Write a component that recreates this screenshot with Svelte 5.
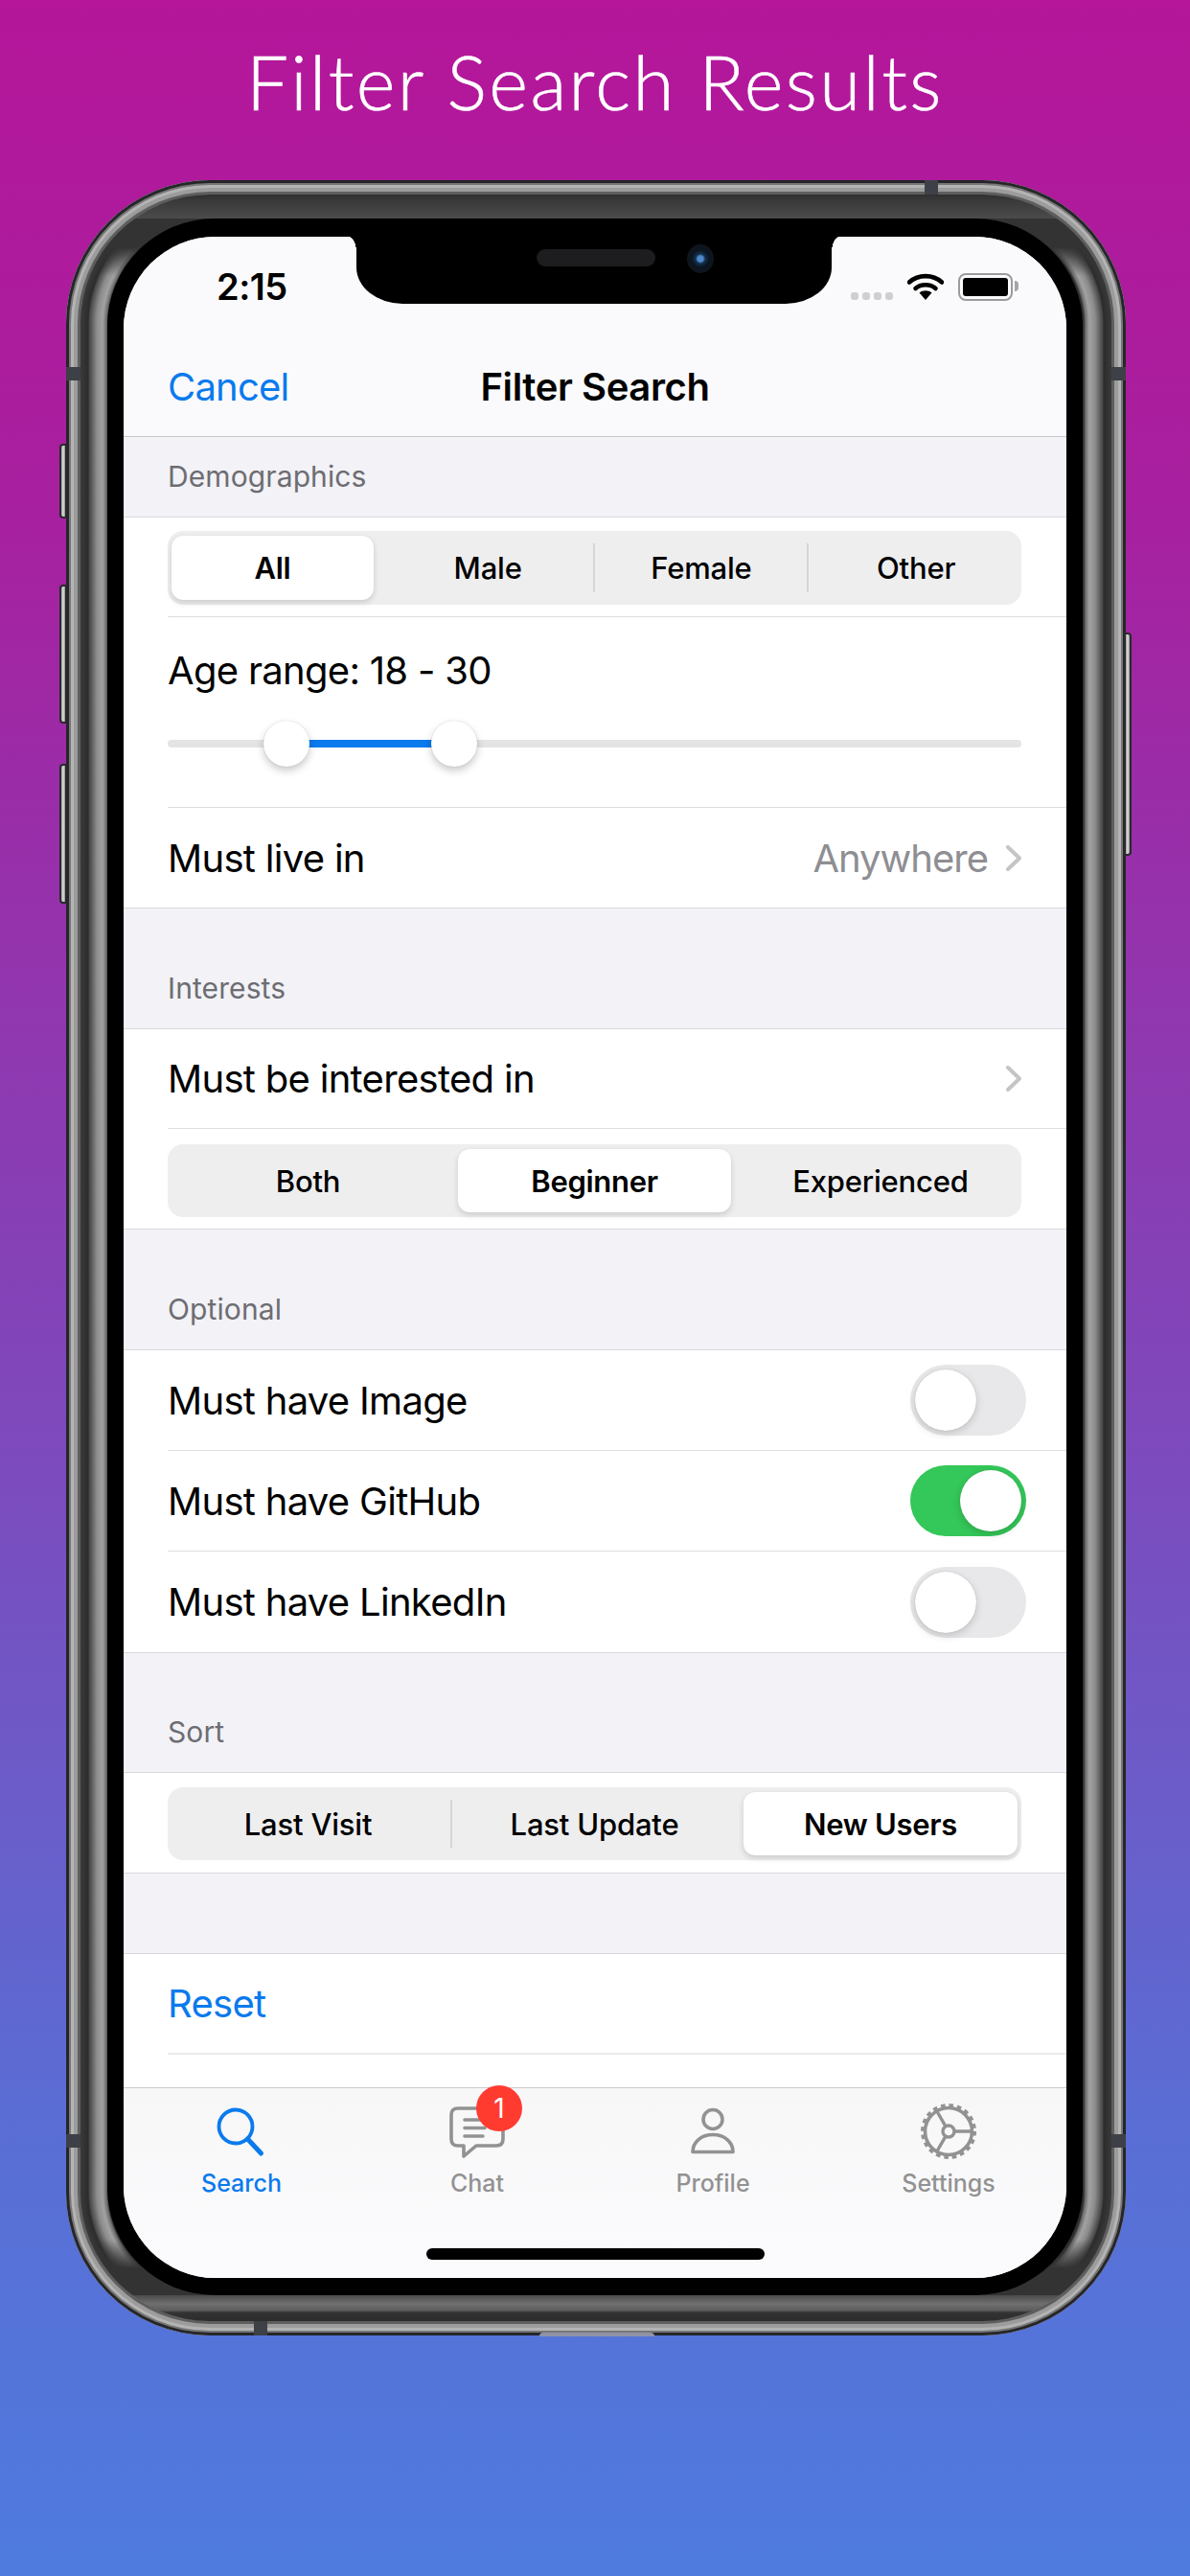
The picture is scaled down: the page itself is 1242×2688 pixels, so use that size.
<script lang="ts">
	type Seg = { label: string; on?: boolean; rule?: boolean };

	const gender: Seg[] = [
		{ label: 'All', on: true },
		{ label: 'Male' },
		{ label: 'Female', rule: true },
		{ label: 'Other', rule: true }
	];
	const level: Seg[] = [{ label: 'Both' }, { label: 'Beginner', on: true }, { label: 'Experienced' }];
	const sort: Seg[] = [{ label: 'Last Visit' }, { label: 'Last Update', rule: true }, { label: 'New Users', on: true }];

	const optional = [
		{ label: 'Must have Image', on: false },
		{ label: 'Must have GitHub', on: true },
		{ label: 'Must have LinkedIn', on: false }
	];

	// thumb centres along the 891px track
	const low = 124;
	const high = 299;

	const tabs = ['Search', 'Chat', 'Profile', 'Settings'];
</script>

{#snippet segmented(items: Seg[])}
	<div class="seg" style="grid-template-columns: repeat({items.length}, 1fr)">
		{#each items as it}
			<div class="cell" class:on={it.on} class:rule={it.rule}>{it.label}</div>
		{/each}
	</div>
{/snippet}

{#snippet chevron()}
	<svg class="chev" viewBox="0 0 16 27" width="16" height="27">
		<path d="M2 2 L14 13.5 L2 25" fill="none" stroke="#c5c5c8" stroke-width="4" stroke-linecap="round" stroke-linejoin="round" />
	</svg>
{/snippet}

<div class="stage">
	<h1>Filter Search Results</h1>

	<div class="phone">
		<i class="btn b1"></i><i class="btn b2"></i><i class="btn b3"></i><i class="btn b4"></i>
		<i class="ant al1"></i><i class="ant al2"></i><i class="ant ar1"></i><i class="ant ar2"></i>
		<i class="ant at"></i><i class="ant ab"></i>
		<i class="bump"></i>

		<div class="mid">
			<div class="black">
				<div class="screen">
					<div class="notch">
						<span class="speaker"></span>
						<span class="camera"></span>
					</div>

					<header class="top">
						<div class="status">
							<span class="time">2:15</span>
							<div class="indicators">
								<span class="dots"><i></i><i></i><i></i><i></i></span>
								<svg viewBox="0 0 38 28" width="38" height="28">
									<path d="M2 9.5 C11.5 1 26.5 1 36 9.5" fill="none" stroke="#000" stroke-width="4.6" stroke-linecap="round" />
									<path d="M8.5 16 C14 11 24 11 29.5 16" fill="none" stroke="#000" stroke-width="4.6" stroke-linecap="round" />
									<path d="M19 28 L12.5 20.5 C16 17.5 22 17.5 25.5 20.5 Z" fill="#000" />
								</svg>
								<span class="battery"><i></i></span>
							</div>
						</div>
						<nav class="nav">
							<span class="cancel">Cancel</span>
							<strong>Filter Search</strong>
						</nav>
					</header>

					<main>
						<div class="head first">Demographics</div>
						<section>
							<div class="row seg-row s1">{@render segmented(gender)}</div>
							<div class="row age">
								<div class="age-label">Age range: 18 - 30</div>
								<div class="track">
									<div class="fill" style="left: {low}px; width: {high - low}px"></div>
									<span class="thumb" style="left: {low}px"></span>
									<span class="thumb" style="left: {high}px"></span>
								</div>
							</div>
							<div class="row last live">
								<span>Must live in</span>
								<span class="value">Anywhere</span>
								{@render chevron()}
							</div>
						</section>

						<div class="head">Interests</div>
						<section>
							<div class="row"><span>Must be interested in</span>{@render chevron()}</div>
							<div class="row seg-row last s2">{@render segmented(level)}</div>
						</section>

						<div class="head">Optional</div>
						<section>
							{#each optional as o, i}
								<div class="row opt" class:last={i === optional.length - 1}>
									<span>{o.label}</span>
									<span class="toggle" class:on={o.on}><i></i></span>
								</div>
							{/each}
						</section>

						<div class="head sort">Sort</div>
						<section>
							<div class="row seg-row last s3">{@render segmented(sort)}</div>
						</section>

						<div class="gap"></div>
						<section class="end">
							<div class="row reset">Reset</div>
						</section>
					</main>

					<footer class="tabbar">
						<div class="tabs">
							{#each tabs as t, i}
								<div class="tab" class:active={i === 0}>
									<div class="icon">
										{#if t === 'Search'}
											<svg viewBox="0 0 60 60" width="60" height="60" fill="none" stroke="#0a7aed" stroke-width="3.8" stroke-linecap="round">
												<circle cx="24" cy="25" r="17.5" />
												<path d="M36.5 38 L50.5 53" stroke-width="5" />
											</svg>
										{:else if t === 'Chat'}
											<svg viewBox="0 0 60 60" width="60" height="60" fill="none" stroke="#929292" stroke-width="3.6" stroke-linecap="round" stroke-linejoin="round">
												<path d="M10 6 H50 Q57 6 57 13 V38 Q57 45 50 45 H29 L16 56 V45 H10 Q3 45 3 38 V13 Q3 6 10 6 Z" />
												<path d="M17 18 H38 M17 26.5 H38 M17 35 H36" />
											</svg>
											<span class="badge">1</span>
										{:else if t === 'Profile'}
											<svg viewBox="0 0 60 60" width="60" height="60" fill="none" stroke="#929292" stroke-width="3.6" stroke-linejoin="round">
												<circle cx="30" cy="17.5" r="10" />
												<path d="M9 51.5 C9 41 18 33.5 30 33.5 C42 33.5 51 41 51 51.5 Z" />
											</svg>
										{:else}
											<svg viewBox="0 0 60 60" width="60" height="60" fill="none" stroke="#929292">
												<circle cx="30" cy="30" r="24.5" stroke-width="3.6" />
												<circle cx="30" cy="30" r="27" stroke-width="4" stroke-dasharray="4.6 3.88" />
												<circle cx="30" cy="30" r="6" stroke-width="3.4" />
												<path d="M36 30 H54 M27 24.8 L17.8 9 M27 35.2 L17.8 51" stroke-width="3.4" />
											</svg>
										{/if}
									</div>
									<span class="tab-label">{t}</span>
								</div>
							{/each}
						</div>
						<div class="home"></div>
					</footer>
				</div>
			</div>
		</div>
	</div>
</div>

<style>
	:global(body) {
		margin: 0;
	}
	.stage {
		height: 2688px;
		box-sizing: border-box;
		padding-top: 35px;
		overflow: hidden;
		background: linear-gradient(180deg, #b5169a 0%, #a7209f 20%, #7b4cbe 58%, #5a6dd4 82%, #4f7bdf 100%);
		font-family: Inter, 'Liberation Sans', sans-serif;
		color: #000;
	}
	h1 {
		margin: 0 0 53px;
		height: 100px;
		line-height: 100px;
		text-align: center;
		color: #fff;
		font-family: Lato, 'Open Sans', sans-serif;
		font-weight: 300;
		font-size: 78px;
		letter-spacing: 2.4px;
		-webkit-text-stroke: 0.6px #fff;
	}

	/* bezel, built from the outside in */
	.phone {
		position: relative;
		box-sizing: border-box;
		width: 1106px;
		height: 2249px;
		margin-left: 69px;
		padding: 15px;
		border-radius: 150px;
		background: #777;
		box-shadow:
			inset 0 0 0 3px #26262a,
			inset 0 0 0 5px #777,
			inset 0 0 0 8px #b4b4b4,
			inset 0 0 0 12px #9c9c9c,
			inset 0 0 0 15px #5e5e5e;
	}
	.mid {
		--bands: #2e2e2e 106px, #6e6e6e 108px, #a2a2a2 112px, #8c8c8c 118px, #444 126px, #2c2c2c 127px, #3a3a3a 135px;
		position: relative;
		box-sizing: border-box;
		height: 100%;
		padding: 25px 30px 27px 28px;
		border-radius: 135px;
		background:
			linear-gradient(180deg, #303030 0, #3a3a3a 7px, #4b4b4b 25px) 0 0 / 100% 25px no-repeat,
			linear-gradient(0deg, #2c2c2c 0, #333 9px, #5c5c5c 11px, #707070 18px, #4a4a4a 27px) 0 100% / 100% 27px no-repeat,
			#333;
	}
	.mid::before {
		content: '';
		position: absolute;
		inset: 0;
		border-radius: inherit;
		background:
			radial-gradient(circle 135px at 100% 100%, var(--bands)) 0 0 / 135px 135px no-repeat,
			radial-gradient(circle 135px at 0 100%, var(--bands)) 100% 0 / 135px 135px no-repeat,
			radial-gradient(circle 135px at 100% 0, var(--bands)) 0 100% / 135px 135px no-repeat,
			radial-gradient(circle 135px at 0 0, var(--bands)) 100% 100% / 135px 135px no-repeat,
			linear-gradient(270deg, var(--bands)) 0 50% / 135px calc(100% - 270px) no-repeat,
			linear-gradient(90deg, var(--bands)) 100% 50% / 135px calc(100% - 270px) no-repeat;
		-webkit-mask-image: linear-gradient(180deg, transparent 55px, #000 85px, #000 calc(100% - 85px), transparent calc(100% - 55px));
		mask-image: linear-gradient(180deg, transparent 55px, #000 85px, #000 calc(100% - 85px), transparent calc(100% - 55px));
	}
	.black {
		position: relative;
		box-sizing: border-box;
		height: 100%;
		padding: 19px 17px 18px;
		border-radius: 112px;
		background: #000;
	}
	.screen {
		position: relative;
		display: flex;
		flex-direction: column;
		height: 100%;
		overflow: hidden;
		border-radius: 96px;
		background: #f2f2f7;
	}

	.btn {
		position: absolute;
		left: -7px;
		width: 8px;
		box-sizing: border-box;
		border: 2px solid #2a2a2e;
		border-radius: 4px 0 0 4px;
		background: linear-gradient(90deg, #999, #e2e2e2 50%, #8a8a8a);
	}
	.b1 { top: 275px; height: 78px; }
	.b2 { top: 422px; height: 145px; }
	.b3 { top: 609px; height: 146px; }
	.b4 {
		left: auto;
		right: -6px;
		top: 472px;
		height: 233px;
		border-radius: 0 4px 4px 0;
	}
	.ant {
		position: absolute;
		background: #3d4047;
	}
	.al1, .al2, .ar1, .ar2 { width: 15px; height: 14px; }
	.al1, .al2 { left: 0; }
	.ar1, .ar2 { right: 0; }
	.al1, .ar1 { top: 195px; }
	.al2, .ar2 { top: 2039px; }
	.at, .ab { width: 14px; height: 15px; }
	.at { top: 0; left: 896px; }
	.ab { bottom: 0; left: 196px; }
	.bump {
		position: absolute;
		left: 494px;
		bottom: -1px;
		width: 120px;
		height: 4px;
		border-radius: 8px 8px 0 0;
		background: #8f93a8;
	}

	.notch {
		position: absolute;
		z-index: 2;
		top: 0;
		left: 243px;
		width: 496px;
		height: 70px;
		background: #000;
		border-radius: 0 0 48px 48px / 0 0 38px 38px;
	}
	.notch::before,
	.notch::after {
		content: '';
		position: absolute;
		top: 0;
		width: 8px;
		height: 16px;
	}
	.notch::before {
		left: -8px;
		background: radial-gradient(ellipse 8px 16px at 0 100%, transparent 98%, #000 100%);
	}
	.notch::after {
		right: -8px;
		background: radial-gradient(ellipse 8px 16px at 100% 100%, transparent 98%, #000 100%);
	}
	.speaker {
		position: absolute;
		left: 188px;
		top: 13px;
		width: 124px;
		height: 18px;
		border-radius: 9px;
		background: #1d1d1f;
	}
	.camera {
		position: absolute;
		left: 345px;
		top: 8px;
		width: 28px;
		height: 30px;
		border-radius: 50%;
		background: radial-gradient(circle, #4d86c9 0 3px, #12304f 5px, #0c1420 9px, #14161a 100%);
	}

	.top {
		height: 209px;
		box-sizing: border-box;
		border-bottom: 1px solid #c9c9cc;
		background: #fafafc;
	}
	.status {
		display: flex;
		justify-content: space-between;
		align-items: center;
		height: 104px;
		padding: 0 50px 0 97px;
	}
	.time {
		font-size: 38px;
		font-weight: 600;
		letter-spacing: -0.5px;
	}
	.indicators {
		display: flex;
		align-items: flex-start;
		gap: 15px;
	}
	.dots {
		display: flex;
		gap: 4px;
		margin-top: 20px;
	}
	.dots i {
		width: 8px;
		height: 8px;
		border-radius: 3px;
		background: #cfcfd1;
	}
	.battery {
		position: relative;
		box-sizing: border-box;
		width: 57px;
		height: 29px;
		padding: 3px;
		margin-right: 6px;
		border: 2px solid #9b9b9e;
		border-radius: 8px;
	}
	.battery i {
		display: block;
		height: 100%;
		border-radius: 3px;
		background: #000;
	}
	.battery::after {
		content: '';
		position: absolute;
		right: -8px;
		top: 6px;
		width: 4px;
		height: 11px;
		border-radius: 0 4px 4px 0;
		background: #a5a5a8;
	}
	.nav {
		position: relative;
		display: flex;
		justify-content: center;
		align-items: center;
		height: 104px;
		font-size: 40px;
	}
	.nav strong {
		font-weight: 600;
		letter-spacing: -0.4px;
	}
	.cancel {
		position: absolute;
		left: 46px;
		color: #0a7aed;
		letter-spacing: -0.8px;
	}

	main {
		flex: 1;
		min-height: 0;
		display: flex;
		flex-direction: column;
		overflow: hidden;
	}
	.head {
		box-sizing: border-box;
		height: 125px;
		flex: none;
		padding: 0 46px 24px;
		display: flex;
		align-items: flex-end;
		font-size: 30px;
		line-height: 36px;
		letter-spacing: 0.1px;
		color: #6d6d72;
	}
	.head.first { height: 83px; }
	.head.sort { height: 124px; }
	section {
		flex: none;
		background: #fff;
		border-top: 1px solid #d8d8dc;
	}
	section.end {
		flex: 1;
	}
	.row {
		display: flex;
		align-items: center;
		box-sizing: border-box;
		height: 104px;
		margin-left: 46px;
		padding-right: 47px;
		border-bottom: 1px solid #dededf;
		font-size: 40px;
		letter-spacing: -0.7px;
	}
	.row > span:first-child {
		margin-right: auto;
	}
	.row.last {
		margin-left: 0;
		padding-left: 46px;
		border-bottom-color: #d8d8dc;
	}
	.row.live { height: 105px; }
	.row.s1 { align-items: flex-start; padding-top: 14px; }
	.row.s2 { align-items: flex-start; padding-top: 16px; height: 105px; }
	.row.s3 { align-items: flex-start; padding-top: 15px; height: 105px; }
	.age {
		display: block;
		height: 199px;
		padding-top: 36px;
	}
	.age-label {
		line-height: 40px;
	}
	.track {
		position: relative;
		height: 8px;
		margin-top: 52px;
		border-radius: 4px;
		background: #e4e4e5;
	}
	.fill {
		position: absolute;
		top: 0;
		height: 8px;
		background: #0a7aed;
	}
	.thumb {
		position: absolute;
		top: -20px;
		width: 48px;
		height: 48px;
		margin-left: -24px;
		border-radius: 50%;
		background: #fff;
		box-shadow: 0 4px 8px rgba(0, 0, 0, 0.22), 0 0 1px rgba(0, 0, 0, 0.2);
	}
	.value {
		margin-right: 19px;
		color: #8e8e93;
		letter-spacing: -1px;
	}
	.seg {
		flex: 1;
		display: grid;
		height: 76px;
		border-radius: 16px;
		background: #eeeeef;
	}
	.s1 .seg { height: 77px; }
	.cell {
		position: relative;
		display: flex;
		align-items: center;
		justify-content: center;
		margin: 5px 6px;
		font-size: 31px;
		font-weight: 450;
		letter-spacing: -0.2px;
	}
	.cell:first-child { margin-left: 4px; margin-right: 8px; }
	.cell:last-child { margin-left: 7px; margin-right: 4px; }
	.cell.on {
		border-radius: 12px;
		background: #fff;
		font-weight: 600;
		letter-spacing: -0.3px;
		box-shadow: 0 3px 6px rgba(0, 0, 0, 0.14), 0 0 1px rgba(0, 0, 0, 0.1);
	}
	.cell.rule::before {
		content: '';
		position: absolute;
		left: -8px;
		top: 8px;
		bottom: 8px;
		width: 2px;
		background: #d6d6d8;
	}
	.opt {
		height: 105px;
		padding-right: 42px;
	}
	.opt.last { height: 106px; }
	.toggle {
		box-sizing: border-box;
		width: 121px;
		height: 74px;
		padding: 5px;
		border-radius: 37px;
		background: #e8e8ea;
	}
	.toggle i {
		display: block;
		width: 64px;
		height: 64px;
		border-radius: 50%;
		background: #fff;
		box-shadow: 0 3px 8px rgba(0, 0, 0, 0.16), 0 0 1px rgba(0, 0, 0, 0.25);
	}
	.toggle.on {
		background: #34c759;
	}
	.toggle.on i {
		margin-left: 47px;
	}
	.gap {
		flex: none;
		height: 83px;
	}
	.reset {
		height: 105px;
		color: #0a7aed;
		border-bottom: 2px solid #ebebec;
	}

	.tabbar {
		display: flex;
		flex-direction: column;
		height: 199px;
		box-sizing: border-box;
		border-top: 1px solid #c9c9cc;
		background: linear-gradient(180deg, #f7f7f8, #fbfbfd);
	}
	.tabs {
		display: grid;
		grid-template-columns: repeat(4, 1fr);
		padding-top: 15px;
	}
	.tab {
		display: flex;
		flex-direction: column;
		align-items: center;
		gap: 9px;
		color: #929292;
	}
	.tab.active {
		color: #0a7aed;
	}
	.icon {
		position: relative;
		width: 60px;
		height: 60px;
	}
	.icon svg {
		display: block;
	}
	.badge {
		position: absolute;
		left: 29px;
		top: -18px;
		width: 48px;
		height: 48px;
		border-radius: 50%;
		background: #ff3b30;
		color: #fff;
		font-size: 28px;
		line-height: 48px;
		text-align: center;
	}
	.tab-label {
		font-size: 25px;
		line-height: 30px;
		font-weight: 500;
	}
	.home {
		width: 353px;
		height: 12px;
		margin: auto auto 19px;
		border-radius: 6px;
		background: #000;
	}
</style>
